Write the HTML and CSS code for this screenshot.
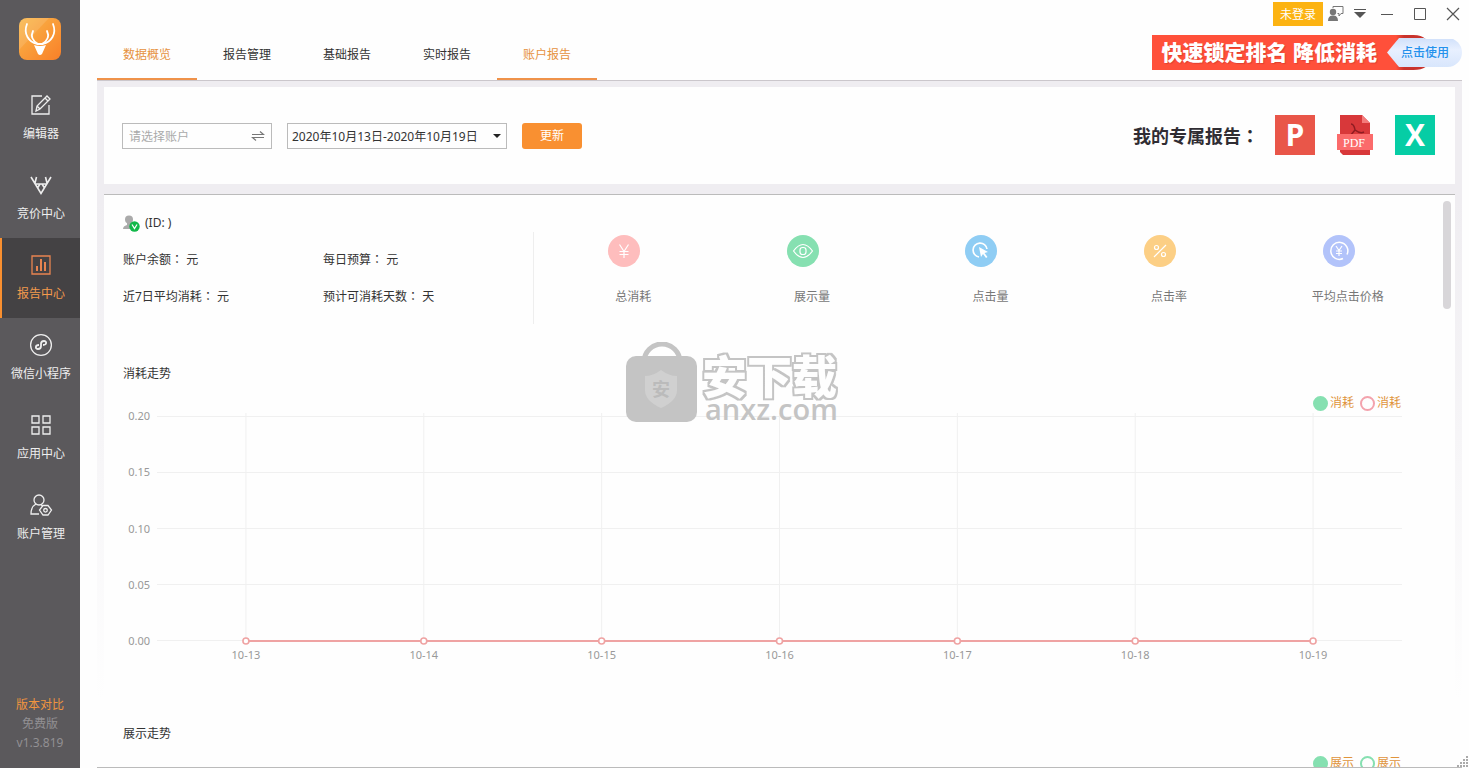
FILE: index.html
```html
<!DOCTYPE html>
<html lang="zh-CN">
<head>
<meta charset="utf-8">
<title>账户报告</title>
<link rel="stylesheet" href="styles.css">
</head>
<body>
<div class="app">
  <aside class="sidebar">
    <svg class="logo" viewBox="0 0 42 42" aria-hidden="true">
      <defs><linearGradient id="logo-bg" x1="0" y1="0" x2="1" y2="1"><stop offset="0" stop-color="#f9b84a"/><stop offset="1" stop-color="#f97f28"/></linearGradient></defs>
      <rect width="42" height="42" rx="8" fill="url(#logo-bg)"/>
      <path d="M0 32V8a8 8 0 0 1 8-8h22z" fill="#fff" opacity=".12"/>
      <g fill="none" stroke="#fff" stroke-linecap="round" stroke-width="1.8"><path d="M8 6c-4 10 2 18 10 20h6c8-2 14-10 10-20"/><path d="M14 13c-3 6 0 10 5 13M28 13c3 6 0 10-5 13"/></g>
      <path d="M15 27q6 2 12 0l-4 9q-2 2-4 0z" fill="#fff"/>
    </svg>
    <nav class="menu">
      <a class="menu-item" href="#editor"><svg viewBox="0 0 24 24"><path d="M13 3H3v18h17v-9"/><path d="m7 18 1-5L18 3l3 3-10 10zM8 13l3 3M16 5l3 3"/></svg>编辑器</a>
      <a class="menu-item" href="#bid"><svg viewBox="0 0 24 24"><path d="m2 4 10 16.500L22 4M7.500 4 6 10M16.500 4 18 10M6 11h12M8.500 15l2.500-4M15.500 15 13 11" stroke-width="1.600"/></svg>竞价中心</a>
      <a class="menu-item active" href="#report"><svg viewBox="0 0 24 24"><path d="M3 3h18v18H3z"/><path d="M8 18v-5M12 18V6M16 18V9" stroke-width="2"/></svg>报告中心</a>
      <a class="menu-item" href="#mini"><svg viewBox="0 0 24 24"><circle cx="12" cy="12" r="10.4"/><path d="M10 12c-4 0-4 4-1 4 2 0 3-1 3-3v-2c0-2 1-3 3-3 3 0 3 4-1 4" stroke-width="1.8"/></svg>微信小程序</a>
      <a class="menu-item" href="#apps"><svg viewBox="0 0 24 24"><path d="M3 3h7v7H3zM14 3h7v7h-7zM3 14h7v7H3zM14 14h7v7h-7z"/></svg>应用中心</a>
      <a class="menu-item" href="#accounts"><svg viewBox="0 0 24 24"><circle cx="10" cy="7" r="5"/><path d="M7 11c-4 2-5 5-5 10h8M12 12l2 1"/><path d="M14 12.500h5l3.500 4.500-3.500 5h-5l-3.500-5z"/><circle cx="16.500" cy="17.300" r="1.800"/></svg>账户管理</a>
    </nav>
    <div class="version">
      <a href="#compare">版本对比</a>
      <span>免费版</span>
      <span>v1.3.819</span>
    </div>
  </aside>

  <main class="main">
    <header class="header">
      <nav class="tabs">
        <a class="tab active" href="#overview">数据概览</a>
        <a class="tab" href="#manage">报告管理</a>
        <a class="tab" href="#basic">基础报告</a>
        <a class="tab" href="#live">实时报告</a>
        <a class="tab active" href="#account">账户报告</a>
      </nav>
      <div class="header-side">
        <div class="window-bar">
          <button class="login">未登录</button>
          <button class="win-btn chat" aria-label="客服"><svg viewBox="0 0 16 16"><path d="M5 2V.5h10v7h-2l-2 2.500V7.500H9.500" fill="none" stroke="#777"/><circle cx="5" cy="6" r="3.200" fill="#777"/><path d="M0 15q0-5 4-5.500h2q4 .5 4 5.500z" fill="#777"/></svg></button>
          <button class="win-btn drop" aria-label="菜单"><svg viewBox="0 0 16 16"><path d="M2 3.500h12" stroke="#555"/><path d="M2 6h12l-6 6z" fill="#555"/></svg></button>
          <button class="win-btn" aria-label="最小化"><svg viewBox="0 0 16 16"><path d="M2 8.500h12" stroke="#555"/></svg></button>
          <button class="win-btn" aria-label="最大化"><svg viewBox="0 0 16 16"><path d="M2.500 2.500h11v11h-11z" fill="none" stroke="#555"/></svg></button>
          <button class="win-btn" aria-label="关闭"><svg viewBox="0 0 16 16"><path d="m2 2 12 12M14 2 2 14" stroke="#555" stroke-width="1.200"/></svg></button>
        </div>
        <a class="banner" href="#promo">
          <span class="banner-text">快速锁定排名 降低消耗</span>
          <span class="banner-pill">点击使用</span>
        </a>
      </div>
    </header>

    <div class="content">
      <section class="filter">
        <div class="controls">
          <div class="account">
            <input type="text" placeholder="请选择账户" aria-label="账户">
            <svg viewBox="0 0 14 12" aria-hidden="true"><path d="M1 4.500h11.500L9 1.500M13 7.500H1.500L5 10.500" fill="none" stroke="#777" stroke-width="1.200"/></svg>
          </div>
          <div class="range">
            <select aria-label="日期范围"><option>2020年10月13日-2020年10月19日</option></select>
            <svg viewBox="0 0 8 4" aria-hidden="true"><path d="M0 0h8L4 4z" fill="#222"/></svg>
          </div>
          <button class="update">更新</button>
        </div>
        <div class="exports">
          <span class="exports-label">我的专属报告<span class="colon" lang="zh-Hant">：</span></span>
          <button class="export ppt" aria-label="导出 PPT">P</button>
          <button class="export" aria-label="导出 PDF"><svg viewBox="0 0 40 40"><path d="M5 0h22l8 8v32H8l-3-3z" fill="#d8383a"/><path d="M27 0v8h8z" fill="#f47b7b"/><path d="M16 9q3 0 4 6 5 4 9 2M20 15l-5 6" fill="none" stroke="#8e1c22" stroke-width="1.500"/><path d="M2 19h36v16H2z" fill="#fb6b6b"/><text x="19" y="32">PDF</text></svg></button>
          <button class="export xls" aria-label="导出 Excel">X</button>
        </div>
      </section>

      <section class="report">
        <div class="scroll-thumb"></div>
        <div class="summary">
          <div class="info">
            <div class="owner"><svg viewBox="0 0 17 17" aria-hidden="true"><circle cx="6" cy="4.500" r="4" fill="#aaa"/><path d="M0 14q0-3 4-4V8h4v2q4 1 4 4z" fill="#aaa"/><circle cx="11.500" cy="11.500" r="5.200" fill="#12b84a"/><path d="m9 9.500 2.500 4 2.500-4" fill="none" stroke="#fff" stroke-width="1.200"/></svg>(ID: )</div>
            <span>账户余额<span class="colon" lang="zh-Hant">：</span> 元</span><span>每日预算<span class="colon" lang="zh-Hant">：</span> 元</span>
            <span>近7日平均消耗<span class="colon" lang="zh-Hant">：</span> 元</span><span>预计可消耗天数<span class="colon" lang="zh-Hant">：</span> 天</span>
          </div>
          <div class="metrics">
            <div class="metric"><svg viewBox="0 0 32 32"><circle class="disc" cx="16" cy="16" r="16" fill="#febdbd"/><path d="m11.500 9.500 4.500 7 4.500-7M16 16v7M11.500 16.500h9M11.500 19.500h9"/></svg>总消耗</div>
            <div class="metric"><svg viewBox="0 0 32 32"><circle class="disc" cx="16" cy="16" r="16" fill="#86e0b1"/><path d="M6.500 16q9.500-13 19 0-9.500 13-19 0z"/><rect x="13" y="12.500" width="6" height="7" rx="2.500"/></svg>展示量</div>
            <div class="metric"><svg viewBox="0 0 32 32"><circle class="disc" cx="16" cy="16" r="16" fill="#8fcdf4"/><path d="M14 22a7 7 0 1 1 8-8" stroke-width="1.600"/><path d="m14 12 9 5-3.500 1 3 4-1.500 1-3-4-2 3z" fill="#fff" stroke="none"/></svg>点击量</div>
            <div class="metric"><svg viewBox="0 0 32 32"><circle class="disc" cx="16" cy="16" r="16" fill="#fccf85"/><path d="m10 22 12-12"/><circle cx="12.500" cy="12.500" r="2"/><circle cx="19.500" cy="19.500" r="2"/></svg>点击率</div>
            <div class="metric"><svg viewBox="0 0 32 32"><circle class="disc" cx="16" cy="16" r="16" fill="#b2c3fa"/><path d="M20 23.500a8.500 8.500 0 1 1 4-4" stroke-width="1.500"/><path d="m13 11 3 4.500 3-4.500M16 15.500V21M13 16h6M13 18.500h6"/></svg>平均点击价格</div>
          </div>
        </div>

        <section class="chart">
          <h2>消耗走势</h2>
          <div class="legend"><span><i class="dot solid"></i>消耗</span><span><i class="dot pink"></i>消耗</span></div>
          <div class="plot-row">
            <div class="y-axis"><span>0.20</span><span>0.15</span><span>0.10</span><span>0.05</span><span>0.00</span></div>
            <svg class="plot" aria-hidden="true">
              <g class="grid">
                <line x1="0" x2="100%" y1="5.500" y2="5.500"/><line x1="0" x2="100%" y1="61.500" y2="61.500"/><line x1="0" x2="100%" y1="117.500" y2="117.500"/><line x1="0" x2="100%" y1="173.500" y2="173.500"/><line x1="0" x2="100%" y1="229.500" y2="229.500"/>
                <line x1="7.143%" x2="7.143%" y1="2" y2="229"/><line x1="21.429%" x2="21.429%" y1="2" y2="229"/><line x1="35.714%" x2="35.714%" y1="2" y2="229"/><line x1="50%" x2="50%" y1="2" y2="229"/><line x1="64.286%" x2="64.286%" y1="2" y2="229"/><line x1="78.571%" x2="78.571%" y1="2" y2="229"/><line x1="92.857%" x2="92.857%" y1="2" y2="229"/>
              </g>
              <g class="series">
                <line x1="7.143%" x2="92.857%" y1="230" y2="230"/>
                <circle cx="7.143%" cy="230" r="3"/><circle cx="21.429%" cy="230" r="3"/><circle cx="35.714%" cy="230" r="3"/><circle cx="50%" cy="230" r="3"/><circle cx="64.286%" cy="230" r="3"/><circle cx="78.571%" cy="230" r="3"/><circle cx="92.857%" cy="230" r="3"/>
              </g>
            </svg>
            <div class="x-axis"><span>10-13</span><span>10-14</span><span>10-15</span><span>10-16</span><span>10-17</span><span>10-18</span><span>10-19</span></div>
          </div>
        </section>

        <section class="chart">
          <h2>展示走势</h2>
          <div class="legend"><span><i class="dot solid"></i>展示</span><span><i class="dot green"></i>展示</span></div>
        </section>
      </section>
    </div>
  </main>

  <svg class="watermark" viewBox="0 0 218 84">
    <defs>
      <filter id="outline" x="-5%" y="-10%" width="110%" height="120%">
        <feMorphology in="SourceAlpha" operator="dilate" radius="2" result="outer"/>
        <feFlood flood-color="#c4c4c4"/><feComposite in2="outer" operator="in" result="edge"/>
        <feMerge><feMergeNode in="edge"/><feMergeNode in="SourceGraphic"/></feMerge>
      </filter>
    </defs>
    <path d="M18 20a18 18 0 0 1 36 0" fill="none" stroke="#c4c4c4" stroke-width="5"/>
    <rect x="0" y="14" width="71" height="66" rx="10" fill="#c4c4c4"/>
    <path d="M35 28q8 6 16 6v14q0 11-16 18-16-7-16-18V34q8 0 16-6z" fill="#d0d0d0"/>
    <text class="mark-badge" x="35" y="54">安</text>
    <text class="mark-name" x="76" y="52" filter="url(#outline)">安下载</text>
    <text class="mark-site" x="79" y="78">anxz.com</text>
  </svg>
  <svg class="grip" viewBox="0 0 12 12" aria-hidden="true"><path d="M10 1h2M7 4h5M4 7h8M1 10h11" stroke="#aaa" stroke-width="2" stroke-dasharray="2 1"/></svg>
</div>
</body>
</html>
```

FILE: styles.css
```css
* { box-sizing: border-box; }

body {
  margin: 0;
  background: #fefefe;
  color: #333;
  font: 12px/18px "Noto Sans", "Noto Sans CJK SC", sans-serif;
}

a { color: inherit; text-decoration: none; }
button, input, select { font: inherit; margin: 0; }
button { border: 0; padding: 0; background: none; cursor: pointer; }

.app { position: relative; display: flex; height: 100vh; overflow: hidden; }

/* The traditional face centres the full-width colon in its cell */
.colon { font-family: "Noto Sans CJK TC", sans-serif; line-height: 1; }

/* Sidebar */
.sidebar {
  flex: 0 0 80px;
  display: flex;
  flex-direction: column;
  background: #5b595c;
  color: #eee;
}
.logo { width: 42px; height: 42px; margin: 18px auto; }
.menu-item {
  display: flex;
  flex-direction: column;
  align-items: center;
  gap: 8px;
  height: 80px;
  padding-top: 15px;
  border-left: 2px solid transparent;
}
.menu-item svg { width: 24px; height: 24px; fill: none; stroke: currentColor; stroke-width: 1.3; }
.menu-item.active { background: #444244; border-color: #f98f2f; color: #f39a4d; }
.menu-item.active svg { stroke: #e88450; }
.version {
  display: flex;
  flex-direction: column;
  margin-top: auto;
  padding-bottom: 16px;
  text-align: center;
  line-height: 19px;
  color: #929093;
}
.version a { color: #f0953f; }

/* Header */
.main { flex: 1; min-width: 0; display: flex; flex-direction: column; padding: 0 7px 0 17px; }
.header { display: flex; justify-content: space-between; height: 80px; }
.tabs { display: flex; align-items: flex-end; }
.tab { width: 100px; height: 36px; text-align: center; padding-top: 2px; border-bottom: 2px solid transparent; }
.tab.active { color: #e6923f; border-color: #ef924a; }
.header-side { display: flex; flex-direction: column; align-items: flex-end; gap: 9px; padding-top: 2px; }
.window-bar { display: flex; align-items: center; gap: 17px; padding-right: 1px; }
.window-bar .login { width: 50px; height: 24px; padding-top: 1px; background: #fcb312; color: #fff; }
.win-btn { width: 16px; height: 16px; }
.win-btn.chat { margin: 0 -9px 0 -12px; }
.win-btn.drop { margin-right: -6px; }
.win-btn svg { display: block; width: 16px; height: 16px; }
.banner {
  display: flex;
  align-items: center;
  height: 35px;
  background: linear-gradient(90deg, #ff503a 244px, #c9332c 252px) 0 0 / 274px 35px no-repeat;
  clip-path: path("M0 0H262Q270 0 274 4H311V32H274Q270 35 262 35H0Z");
}
.banner-text {
  padding: 0 10px;
  color: #fff;
  font-size: 21px;
  font-weight: 900;
  line-height: 35px;
  text-shadow: 1px 1px 1px #e04030;
}
.banner-pill {
  width: 75px;
  height: 29px;
  padding-left: 14px;
  background: linear-gradient(#d0e0fa, #e8f0ff 40%, #d8e6fc);
  border-radius: 0 15px 15px 0;
  clip-path: polygon(0 50%, 12px 0, 100% 0, 100% 100%, 12px 100%);
  color: #2391ec;
  font-weight: 500;
  line-height: 29px;
}

/* Content */
.content {
  flex: 1;
  min-height: 0;
  display: flex;
  flex-direction: column;
  gap: 10px;
  padding: 6px 7px 0;
  border-top: 1px solid #cbc7cc;
  border-bottom: 1px solid #bbb;
  background: linear-gradient(#efedf1 120px, #fefefe 620px);
}
.filter { display: flex; align-items: center; justify-content: space-between; padding: 28px 20px 29px 18px; background: #fefefe; }
.controls { display: flex; gap: 15px; padding-top: 2px; }
.account, .range { position: relative; }
.account input, .range select {
  display: block;
  height: 26px;
  border: 1px solid #bbb;
  border-radius: 0;
  background: #fefefe;
  color: #333;
  appearance: none;
}
.account input { width: 150px; padding: 1px 28px 0 6px; }
.account input::placeholder { color: #aaa; }
.account svg { position: absolute; right: 7px; top: 7px; width: 14px; height: 12px; }
.range select { width: 220px; padding: 2px 20px 0 4px; }
.range svg { position: absolute; right: 6px; top: 11px; width: 8px; height: 4px; }
.update { width: 60px; height: 26px; border-radius: 3px; background: #f99031; color: #fff; }
.exports { display: flex; align-items: center; gap: 20px; }
.exports-label { margin-right: -4px; padding-top: 2px; font-size: 18px; font-weight: 700; line-height: 24px; color: #302d33; }
.export { width: 40px; height: 40px; color: #fff; font: 700 30px/40px "Open Sans", sans-serif; }
.export svg { display: block; }
.export text { fill: #fff; font: 12px "Liberation Serif", serif; text-anchor: middle; }
.ppt { background: #e95649; }
.xls { background: #06cda5; }

.report {
  position: relative;
  flex: 1;
  min-height: 0;
  padding: 19px 18px 0;
  border-top: 1px solid #bbb;
  background: #fefefe;
  overflow: hidden;
}
.scroll-thumb { position: absolute; top: 6px; right: 4px; width: 8px; height: 108px; border-radius: 4px; background: #d8d6d9; }
.summary { display: flex; margin-bottom: 41px; }
.info { flex: none; display: grid; grid-template-columns: 200px 210px; grid-auto-rows: 18px; row-gap: 19px; padding-left: 1px; }
.owner { grid-column: 1 / -1; display: flex; align-items: center; gap: 5px; }
.owner svg { width: 17px; height: 17px; }
.metrics { flex: 1; display: flex; padding-left: 11px; position: relative; }
.metrics::before { content: ""; position: absolute; left: 0; top: 18px; width: 1px; height: 92px; background: #eee; }
.metric { flex: 1; display: flex; flex-direction: column; align-items: center; gap: 21px; padding: 21px 0 18px; color: #777; }
.metric svg { width: 32px; height: 32px; margin-right: 18px; fill: none; stroke: #fff; stroke-width: 1.2; }
.metric .disc { stroke: none; }

/* Charts */
.chart { padding-right: 35px; margin-bottom: 61px; }
.chart h2 { margin: 0 0 11px; font-size: 12px; font-weight: 400; line-height: 18px; padding-left: 1px; }
.legend { display: flex; justify-content: flex-end; gap: 6px; padding-right: 1px; color: #e0943c; }
.legend span { display: flex; align-items: center; gap: 2px; }
.dot { width: 15px; height: 15px; border-radius: 50%; border: 2px solid #86e0b1; }
.dot.solid { background: #86e0b1; }
.dot.pink { border-color: #f3a3ad; }
.plot-row { display: grid; grid-template-columns: 28px 1fr; grid-template-rows: 230px 18px; gap: 5px 7px; margin-top: -1px; font-size: 11px; color: #999; }
.y-axis { display: flex; flex-direction: column; justify-content: space-between; margin: -3px 0 -8px; text-align: right; line-height: 16px; }
.plot { display: block; width: 100%; height: 230px; overflow: visible; }
.grid line { stroke: #f0f0f0; }
.series line { stroke: #efa3a3; stroke-width: 2; }
.series circle { fill: #fff; stroke: #efa3a3; stroke-width: 1.6; }
.x-axis { grid-column: 2; display: grid; grid-template-columns: repeat(7, 1fr); text-align: center; }

/* Overlays */
.watermark { position: absolute; left: 50%; top: 50%; width: 218px; height: 84px; margin: -42px 0 0 -109px; pointer-events: none; }
.mark-badge { fill: #bbb; font-size: 18px; font-weight: 700; text-anchor: middle; }
.mark-name { fill: #fefefe; font-size: 45px; font-weight: 900; }
.mark-site { fill: #c4c4c4; font: 600 29px "Open Sans", sans-serif; }
.grip { position: absolute; right: 1px; bottom: 0; width: 12px; height: 12px; }
```
